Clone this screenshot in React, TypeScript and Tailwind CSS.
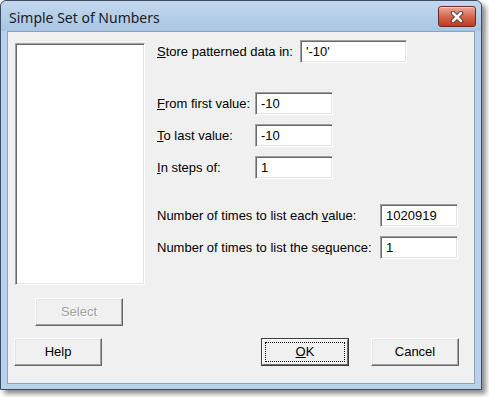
const inputCls =
  'h-[23px] bg-white border border-t-[#a0a0a0] border-l-[#a0a0a0] border-b-white border-r-white shadow-[inset_1px_1px_0_#696969,inset_-1px_-1px_0_#e3e3e3] pl-[5px] flex items-center text-[13px] text-black';

const btnCls =
  'w-[88px] h-[28px] flex items-center justify-center text-[13px] bg-[#f0f0f0] border border-t-[#fdfdfd] border-l-[#fdfdfd] border-b-[#696969] border-r-[#696969] shadow-[inset_-1px_-1px_0_#a0a0a0,inset_1px_1px_0_#e3e3e3]';

const Field = ({
  label,
  labelW,
  inputW,
  value,
  mt,
}: {
  label: React.ReactNode;
  labelW: string;
  inputW: string;
  value: string;
  mt: string;
}) => (
  <div className={`flex items-center ${mt}`}>
    <div className={`${labelW} text-[13px] text-black whitespace-nowrap`}>{label}</div>
    <div className={`${inputCls} ${inputW}`}>{value}</div>
  </div>
);

const App = () => {
  return (
    <div className="w-[489px] h-[397px] bg-white overflow-hidden font-['Liberation_Sans',Arial,sans-serif]">
      <div className="w-[482px] h-[390px] flex flex-col rounded-t-[6px] border border-[#3d4d60] bg-[#b9d1ea] shadow-[4px_4px_5px_rgba(0,0,0,0.45)]">
        {/* title bar */}
        <div className="h-[30px] flex items-start justify-between pl-[8px] pr-[5px] pt-[5px] rounded-t-[6px] bg-gradient-to-b from-[#c3d8ee] to-[#a9c5e3]">
          <span className="mt-[2px] text-[14px] leading-[20px] text-[#1b1b1b] font-['Noto_Sans',sans-serif]">
            Simple Set of Numbers
          </span>
          <div className="w-[38px] h-[21px] flex items-center justify-center rounded-[3px] border border-[#6b2b22] bg-gradient-to-b from-[#eaa899] via-[#d4674f] to-[#c0391f] shadow-[inset_0_1px_0_rgba(255,255,255,0.45)]">
            <svg width="14" height="12" viewBox="0 0 14 12">
              <path d="M3 2 L11 10 M11 2 L3 10" stroke="#4a2a24" strokeWidth="4.4" strokeLinecap="round" />
              <path d="M3 2 L11 10 M11 2 L3 10" stroke="#ffffff" strokeWidth="2.6" strokeLinecap="round" />
            </svg>
          </div>
        </div>

        {/* client area */}
        <div className="flex-1 mx-[6px] mb-[5px] bg-[#f0f0f0] border border-[#8aa4c0] flex flex-col pt-[8px] pl-[6px]">
          <div className="flex">
            <div className="flex flex-col ml-[1px] mt-[3px]">
              <div className="w-[130px] h-[242px] bg-white border border-t-[#a0a0a0] border-l-[#a0a0a0] border-b-white border-r-white shadow-[inset_1px_1px_0_#696969,inset_-1px_-1px_0_#e3e3e3]" />
              <div className={`${btnCls} mt-[13px] ml-[20px] text-[#a0a0a0] [text-shadow:1px_1px_0_#ffffff]`}>
                Select
              </div>
            </div>

            <div className="flex flex-col ml-[12px]">
              <Field
                mt="mt-0"
                labelW="w-[143px]"
                inputW="w-[107px]"
                value="'-10'"
                label={<><u>S</u>tore patterned data in:</>}
              />
              <Field
                mt="mt-[29px]"
                labelW="w-[98px]"
                inputW="w-[78px]"
                value="-10"
                label={<><u>F</u>rom first value:</>}
              />
              <Field
                mt="mt-[9px]"
                labelW="w-[98px]"
                inputW="w-[78px]"
                value="-10"
                label={<><u>T</u>o last value:</>}
              />
              <Field
                mt="mt-[9px]"
                labelW="w-[98px]"
                inputW="w-[78px]"
                value="1"
                label={<><u>I</u>n steps of:</>}
              />
              <Field
                mt="mt-[25px]"
                labelW="w-[223px]"
                inputW="w-[78px]"
                value="1020919"
                label={<>Number of times to list each <u>v</u>alue:</>}
              />
              <Field
                mt="mt-[9px]"
                labelW="w-[223px]"
                inputW="w-[78px]"
                value="1"
                label={<>Number of times to list the se<u>q</u>uence:</>}
              />
            </div>
          </div>

          <div className="flex mt-[12px]">
            <div className={`${btnCls} text-black`}>Help</div>
            <div className="ml-[159px] w-[88px] h-[28px] border border-[#3c3c3c] flex">
              <div className="flex-1 flex items-center justify-center bg-[#f0f0f0] border border-t-[#fdfdfd] border-l-[#fdfdfd] border-b-[#696969] border-r-[#696969] p-[2px]">
                <div className="w-full h-full border border-dotted border-black flex items-center justify-center text-[13px] text-black">
                  <span><u>O</u>K</span>
                </div>
              </div>
            </div>
            <div className={`${btnCls} ml-[22px] text-black`}>Cancel</div>
          </div>
        </div>
      </div>
    </div>
  );
};

export default App;
